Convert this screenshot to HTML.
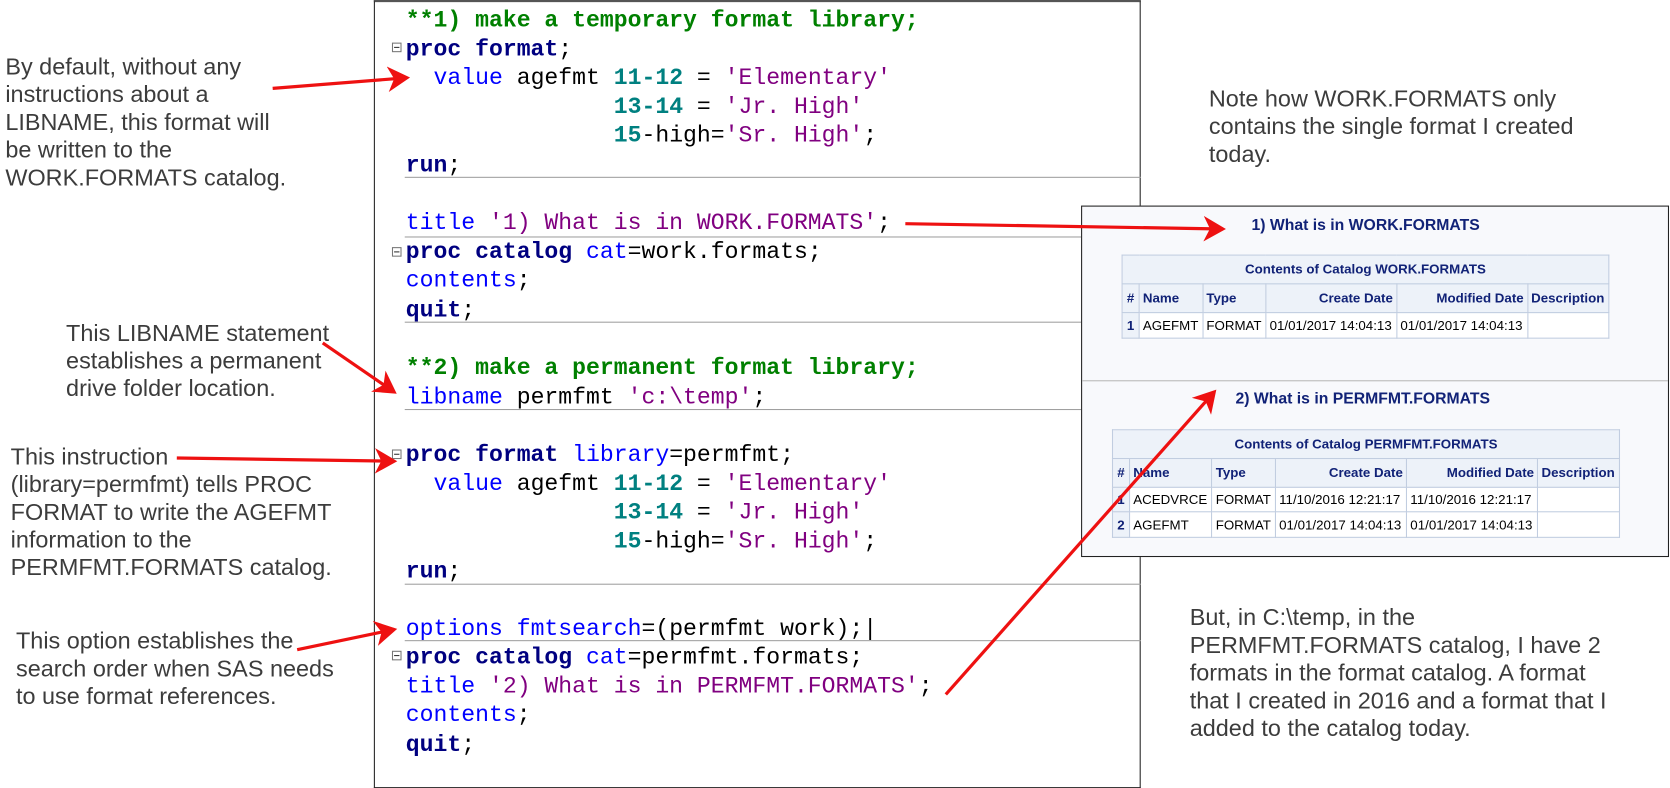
<!DOCTYPE html>
<html><head><meta charset="utf-8"><style>
body{margin:0;width:1670px;height:788px;background:#fff;position:relative;overflow:hidden;font-family:"Liberation Sans",sans-serif}
#w{position:absolute;left:0;top:0;width:1568px;height:740px;transform:scale(1.0651);transform-origin:0 0}
.note{position:absolute;font-size:22px;line-height:26px;color:#3c3c3c;white-space:nowrap}
#code{position:absolute;left:351px;top:0;width:720px;height:740px;border-left:1.5px solid #222;border-right:1.5px solid #222;border-top:2px solid #555;border-bottom:1px solid #222;box-sizing:border-box}
.l{position:absolute;left:381px;font-family:"Liberation Mono",monospace;font-size:21.7px;line-height:26px;white-space:pre;color:#000;margin-top:2px}
.c{color:#008000;font-weight:bold}.k{color:#000080;font-weight:bold}.b{color:#0000ff}.s{color:#800080}.n{color:#008080;font-weight:bold}
.div{position:absolute;left:380px;width:691px;height:1px;background:#a0a0a0}
.fold{position:absolute;left:368px;width:7px;height:7px;border:1px solid #777;font-size:0}
.fold:after{content:"";position:absolute;left:1px;top:3px;width:5px;height:1px;background:#333}
#out{position:absolute;left:1015px;top:193px;width:552px;height:330px;border:1.5px solid #222;background:#f8f9fc;box-sizing:border-box}
.ttl{position:absolute;font-weight:bold;color:#112277;font-size:14.8px;white-space:nowrap}
table{position:absolute;border-collapse:collapse;font-size:12.5px;color:#000;background:#fff}
td,th{border:1px solid #c1cde0;padding:0 3px;white-space:nowrap}
th{background:#edf2f9;color:#112277;font-weight:bold}
td.h{background:#edf2f9;color:#112277;font-weight:bold;text-align:center}
.r{text-align:right}
</style></head><body><div id="w">
<div class="note" style="left:5px;top:50px">By default, without any<br>instructions about a<br>LIBNAME, this format will<br>be written to the<br>WORK.FORMATS catalog.</div>
<div class="note" style="left:62px;top:300px">This LIBNAME statement<br>establishes a permanent<br>drive folder location.</div>
<div class="note" style="left:10px;top:416px">This instruction<br>(library=permfmt) tells PROC<br>FORMAT to write the AGEFMT<br>information to the<br>PERMFMT.FORMATS catalog.</div>
<div class="note" style="left:15px;top:589px">This option establishes the<br>search order when SAS needs<br>to use format references.</div>
<div class="note" style="left:1135px;top:80px">Note how WORK.FORMATS only<br>contains the single format I created<br>today.</div>
<div class="note" style="left:1117px;top:567px">But, in C:\temp, in the<br>PERMFMT.FORMATS catalog, I have 2<br>formats in the format catalog. A format<br>that I created in 2016 and a format that I<br>added to the catalog today.</div>

<div id="code"></div>
<div class="l" style="top:5px"><span class="c">**1) make a temporary format library;</span></div>
<div class="fold" style="top:40px"></div>
<div class="l" style="top:32px"><span class="k">proc format</span>;</div>
<div class="l" style="top:59px">  <span class="b">value</span> agefmt <span class="n">11-12</span> = <span class="s">'Elementary'</span></div>
<div class="l" style="top:86px">               <span class="n">13-14</span> = <span class="s">'Jr. High'</span></div>
<div class="l" style="top:113px">               <span class="n">15</span>-high=<span class="s">'Sr. High'</span>;</div>
<div class="l" style="top:141px"><span class="k">run</span>;</div>
<div class="div" style="top:166px"></div>
<div class="l" style="top:195px"><span class="b">title</span> <span class="s">'1) What is in WORK.FORMATS'</span>;</div>
<div class="div" style="top:222px"></div>
<div class="fold" style="top:232px"></div>
<div class="l" style="top:222px"><span class="k">proc catalog</span> <span class="b">cat</span>=work.formats;</div>
<div class="l" style="top:249px"><span class="b">contents</span>;</div>
<div class="l" style="top:277px"><span class="k">quit</span>;</div>
<div class="div" style="top:302px"></div>
<div class="l" style="top:331px"><span class="c">**2) make a permanent format library;</span></div>
<div class="l" style="top:359px"><span class="b">libname</span> permfmt <span class="s">'c:\temp'</span>;</div>
<div class="div" style="top:384px"></div>
<div class="fold" style="top:422px"></div>
<div class="l" style="top:413px"><span class="k">proc format</span> <span class="b">library</span>=permfmt;</div>
<div class="l" style="top:440px">  <span class="b">value</span> agefmt <span class="n">11-12</span> = <span class="s">'Elementary'</span></div>
<div class="l" style="top:467px">               <span class="n">13-14</span> = <span class="s">'Jr. High'</span></div>
<div class="l" style="top:494px">               <span class="n">15</span>-high=<span class="s">'Sr. High'</span>;</div>
<div class="l" style="top:522px"><span class="k">run</span>;</div>
<div class="div" style="top:548px"></div>
<div class="l" style="top:576px"><span class="b">options</span> <span class="b">fmtsearch</span>=(permfmt work);|</div>
<div class="div" style="top:601px"></div>
<div class="fold" style="top:611px"></div>
<div class="l" style="top:603px"><span class="k">proc catalog</span> <span class="b">cat</span>=permfmt.formats;</div>
<div class="l" style="top:630px"><span class="b">title</span> <span class="s">'2) What is in PERMFMT.FORMATS'</span>;</div>
<div class="l" style="top:657px"><span class="b">contents</span>;</div>
<div class="l" style="top:685px"><span class="k">quit</span>;</div>

<div id="out">
<div style="position:absolute;left:0;right:0;top:163px;height:1px;background:#b8b8b8"></div>
</div>
<div class="ttl" style="left:1175px;top:204px">1) What is in WORK.FORMATS</div>
<table style="left:1053px;top:239px;width:458px">
<tr style="height:27px"><td class="h" colspan="6">Contents of Catalog WORK.FORMATS</td></tr>
<tr style="height:27px"><th style="width:9px">#</th><th style="text-align:left">Name</th><th style="text-align:left">Type</th><th class="r">Create Date</th><th class="r">Modified Date</th><th style="text-align:left">Description</th></tr>
<tr style="height:24px"><td class="h">1</td><td>AGEFMT</td><td>FORMAT</td><td>01/01/2017 14:04:13</td><td>01/01/2017 14:04:13</td><td></td></tr>
</table>
<div class="ttl" style="left:1160px;top:367px">2) What is in PERMFMT.FORMATS</div>
<table style="left:1044px;top:403px;width:477px">
<tr style="height:27px"><td class="h" colspan="6">Contents of Catalog PERMFMT.FORMATS</td></tr>
<tr style="height:27px"><th style="width:9px">#</th><th style="text-align:left">Name</th><th style="text-align:left">Type</th><th class="r">Create Date</th><th class="r">Modified Date</th><th style="text-align:left">Description</th></tr>
<tr style="height:23px"><td class="h">1</td><td>ACEDVRCE</td><td>FORMAT</td><td>11/10/2016 12:21:17</td><td>11/10/2016 12:21:17</td><td></td></tr>
<tr style="height:24px"><td class="h">2</td><td>AGEFMT</td><td>FORMAT</td><td>01/01/2017 14:04:13</td><td>01/01/2017 14:04:13</td><td></td></tr>
</table>

<svg width="1568" height="740" style="position:absolute;left:0;top:0">
<defs><marker id="a" markerWidth="8" markerHeight="8" refX="6" refY="4" orient="auto" markerUnits="strokeWidth"><path d="M0,0 L7,4 L0,8 L2,4 Z" fill="#ee1111"/></marker></defs>
<g stroke="#ee1111" stroke-width="3" fill="none" marker-end="url(#a)">
<line x1="256" y1="83" x2="382" y2="73"/>
<line x1="850" y1="210" x2="1148" y2="215"/>
<line x1="303" y1="322" x2="370" y2="368"/>
<line x1="166" y1="430" x2="370" y2="433"/>
<line x1="279" y1="610" x2="370" y2="591"/>
<line x1="888" y1="652" x2="1140" y2="368"/>
</g>
</svg>
</div></body></html>
